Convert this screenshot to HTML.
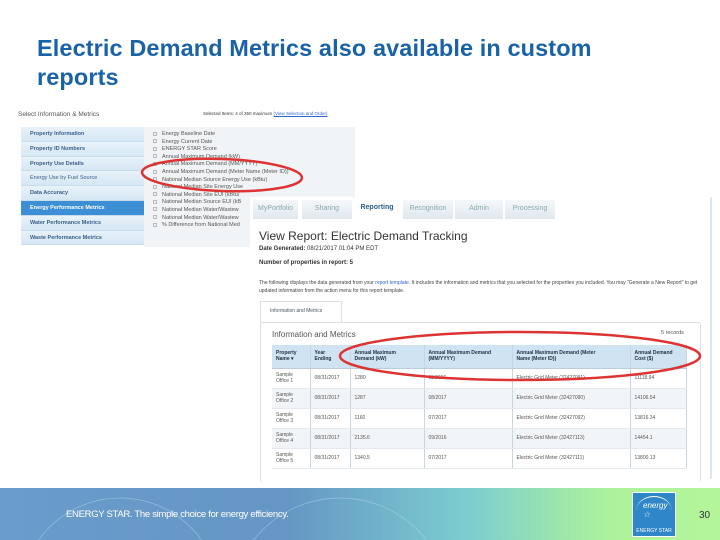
<!DOCTYPE html>
<html><head><style>
*{margin:0;padding:0;box-sizing:border-box}
body{width:720px;height:540px;position:relative;overflow:hidden;background:#fff;font-family:"Liberation Sans",sans-serif}
.a{position:absolute}
h1{position:absolute;left:37px;top:34px;font-size:23.5px;line-height:29px;font-weight:bold;color:#1a62a8;letter-spacing:0.1px;white-space:nowrap}
.nav div{height:14.8px;border-bottom:1px solid #c9dcea;background:linear-gradient(#e8f2fa,#d6e7f4);font-size:5.5px;color:#3a5f8a;font-weight:bold;padding:4px 0 0 9px}
.nav div.on{background:#3c8fd4;color:#fff}
.chk{font-size:5.5px;color:#555;line-height:7.6px;white-space:nowrap;overflow:hidden}
.chk span{display:inline-block;width:4px;height:4px;border:1px solid #bbb;margin-right:5px;vertical-align:middle}
.tab{position:absolute;top:200px;height:19px;font-size:7px;color:#8aa;background:linear-gradient(#f5f8fa,#dfe8ee);padding-top:5px;text-align:center}
table{border-collapse:collapse;font-size:5px;color:#555}
td,th{border-right:1px solid #c8d6e0;padding:1px 4px;text-align:left;vertical-align:middle}
th{background:#cfe3f2;color:#234;font-weight:bold;height:23px;border-bottom:1px solid #bcd}
td{height:20px;border-bottom:1px solid #e3e9ee}
tr:nth-child(odd) td{background:#f2f5f7}
</style></head><body>
<h1>Electric Demand Metrics also available in custom<br>reports</h1>

<div class="a" style="left:18px;top:111px;font-size:6.5px;color:#555">Select Information &amp; Metrics</div>
<div class="a" style="left:203px;top:111px;font-size:4.5px;color:#333">Selected Items: 4 of 250 maximum <u style="color:#36c">(View Selection and Order)</u></div>
<div class="a nav" style="left:21px;top:127px;width:123px;">
<div>Property Information</div><div>Property ID Numbers</div><div>Property Use Details</div><div style="font-weight:normal">Energy Use by Fuel Source</div><div>Data Accuracy</div><div class="on">Energy Performance Metrics</div><div>Water Performance Metrics</div><div>Waste Performance Metrics</div>
</div>
<div class="a" style="left:144px;top:127px;width:211px;height:120px;background:#f1f4f6"></div>
<div class="a chk" style="left:153px;top:131px;width:200px;height:118px">
<div><span></span>Energy Baseline Date</div><div><span></span>Energy Current Date</div><div><span></span>ENERGY STAR Score</div><div><span></span>Annual Maximum Demand (kW)</div><div><span></span>Annual Maximum Demand (MM/YYYY)</div><div><span></span>Annual Maximum Demand (Meter Name (Meter ID))</div><div><span></span>National Median Source Energy Use (kBtu)</div><div><span></span>National Median Site Energy Use</div><div><span></span>National Median Site EUI (kBtu/</div><div><span></span>National Median Source EUI (kB</div><div><span></span>National Median Water/Wastew</div><div><span></span>National Median Water/Wastew</div><div><span></span>% Difference from National Med</div>
</div>

<div class="a" style="left:250px;top:197px;width:462px;height:282px;background:#fff;border-right:2px solid #dde6ec"></div>
<div class="tab" style="left:253px;width:45px">MyPortfolio</div>
<div class="tab" style="left:302px;width:50px">Sharing</div>
<div class="tab" style="left:353px;width:48px;background:#fff;color:#2a5f8a;font-weight:bold;top:199px">Reporting</div>
<div class="tab" style="left:403px;width:50px">Recognition</div>
<div class="tab" style="left:455px;width:48px">Admin</div>
<div class="tab" style="left:505px;width:50px">Processing</div>
<div class="a" style="left:259px;top:229px;font-size:12px;color:#333">View Report: Electric Demand Tracking</div>
<div class="a" style="left:259px;top:246px;font-size:6px;color:#333;font-weight:bold">Date Generated: <span style="font-weight:normal">08/21/2017 01:04 PM EDT</span></div>
<div class="a" style="left:259px;top:260px;font-size:6px;color:#333;font-weight:bold">Number of properties in report: 5</div>
<div class="a" style="left:259px;top:280px;width:440px;font-size:5px;line-height:7.5px;color:#444">The following displays the data generated from your <span style="color:#36c">report template</span>. It includes the information and metrics that you selected for the properties you included. You may "Generate a New Report" to get updated information from the action menu for this report template.</div>
<div class="a" style="left:260px;top:301px;width:82px;height:22px;border:1px solid #dde;border-bottom:none;font-size:5px;color:#456;padding:6px 0 0 9px;background:#fff">Information and Metrics</div>
<div class="a" style="left:260px;top:322px;width:441px;height:160px;border:1px solid #dde;border-bottom:none;border-radius:3px"></div>
<div class="a" style="left:272px;top:330px;font-size:8px;color:#555">Information and Metrics</div>
<div class="a" style="left:661px;top:330px;font-size:5.5px;color:#555">5 records</div>
<table class="a" style="left:272px;top:345px;width:415px">
<tr><th style="width:38px">Property<br>Name ▾</th><th style="width:40px">Year<br>Ending</th><th style="width:74px">Annual Maximum<br>Demand (kW)</th><th style="width:88px">Annual Maximum Demand<br>(MM/YYYY)</th><th style="width:118px">Annual Maximum Demand (Meter<br>Name (Meter ID))</th><th>Annual Demand<br>Cost ($)</th></tr>
<tr><td>Sample<br>Office 1</td><td>08/31/2017</td><td>1280</td><td>11/2016</td><td>Electric Grid Meter (32427091)</td><td>11118.94</td></tr>
<tr><td>Sample<br>Office 2</td><td>08/31/2017</td><td>1287</td><td>08/2017</td><td>Electric Grid Meter (32427090)</td><td>14106.54</td></tr>
<tr><td>Sample<br>Office 3</td><td>08/31/2017</td><td>1160</td><td>07/2017</td><td>Electric Grid Meter (32427092)</td><td>13816.34</td></tr>
<tr><td>Sample<br>Office 4</td><td>08/31/2017</td><td>2135.6</td><td>09/2016</td><td>Electric Grid Meter (32427113)</td><td>14454.1</td></tr>
<tr><td>Sample<br>Office 5</td><td>08/31/2017</td><td>1340.5</td><td>07/2017</td><td>Electric Grid Meter (32427111)</td><td>13800.13</td></tr>
</table>

<svg class="a" style="left:0;top:0" width="720" height="540">
<ellipse cx="222" cy="175" rx="80" ry="16" fill="none" stroke="#d33" stroke-width="2.5" transform="rotate(2 222 175)"/>
<ellipse cx="520" cy="356" rx="180" ry="24" fill="none" stroke="#d33" stroke-width="2.5"/>
</svg>

<div class="a" style="left:0;top:488px;width:720px;height:52px;background:linear-gradient(90deg,#6a9ccc 0%,#6596c4 40%,#7ccdd0 65%,#aef39a 85%,#b3f59a 100%)"></div>
<svg class="a" style="left:0;top:488px" width="720" height="52"><g fill="none" stroke="#b8d6ea" stroke-width="0.7" opacity="0.6"><circle cx="120" cy="110" r="100"/><circle cx="340" cy="120" r="110"/></g></svg>
<div class="a" style="left:66px;top:509px;font-size:9.5px;color:#fff;letter-spacing:-0.3px">ENERGY STAR. The simple choice for energy efficiency.</div>
<div class="a" style="left:632px;top:492px;width:44px;height:45px;background:#2f86c8;border:1px solid #fff"><div style="position:absolute;bottom:2px;width:100%;text-align:center;font-size:5px;color:#fff">ENERGY STAR</div><div style="position:absolute;left:3px;top:3px;width:36px;height:30px;border-top:1px solid #fff;border-radius:50% 50% 0 0"></div><div style="position:absolute;left:10px;top:8px;font-size:8px;color:#fff;font-style:italic">energy ☆</div></div>
<div class="a" style="left:699px;top:510px;font-size:10px;color:#333">30</div>
</body></html>
